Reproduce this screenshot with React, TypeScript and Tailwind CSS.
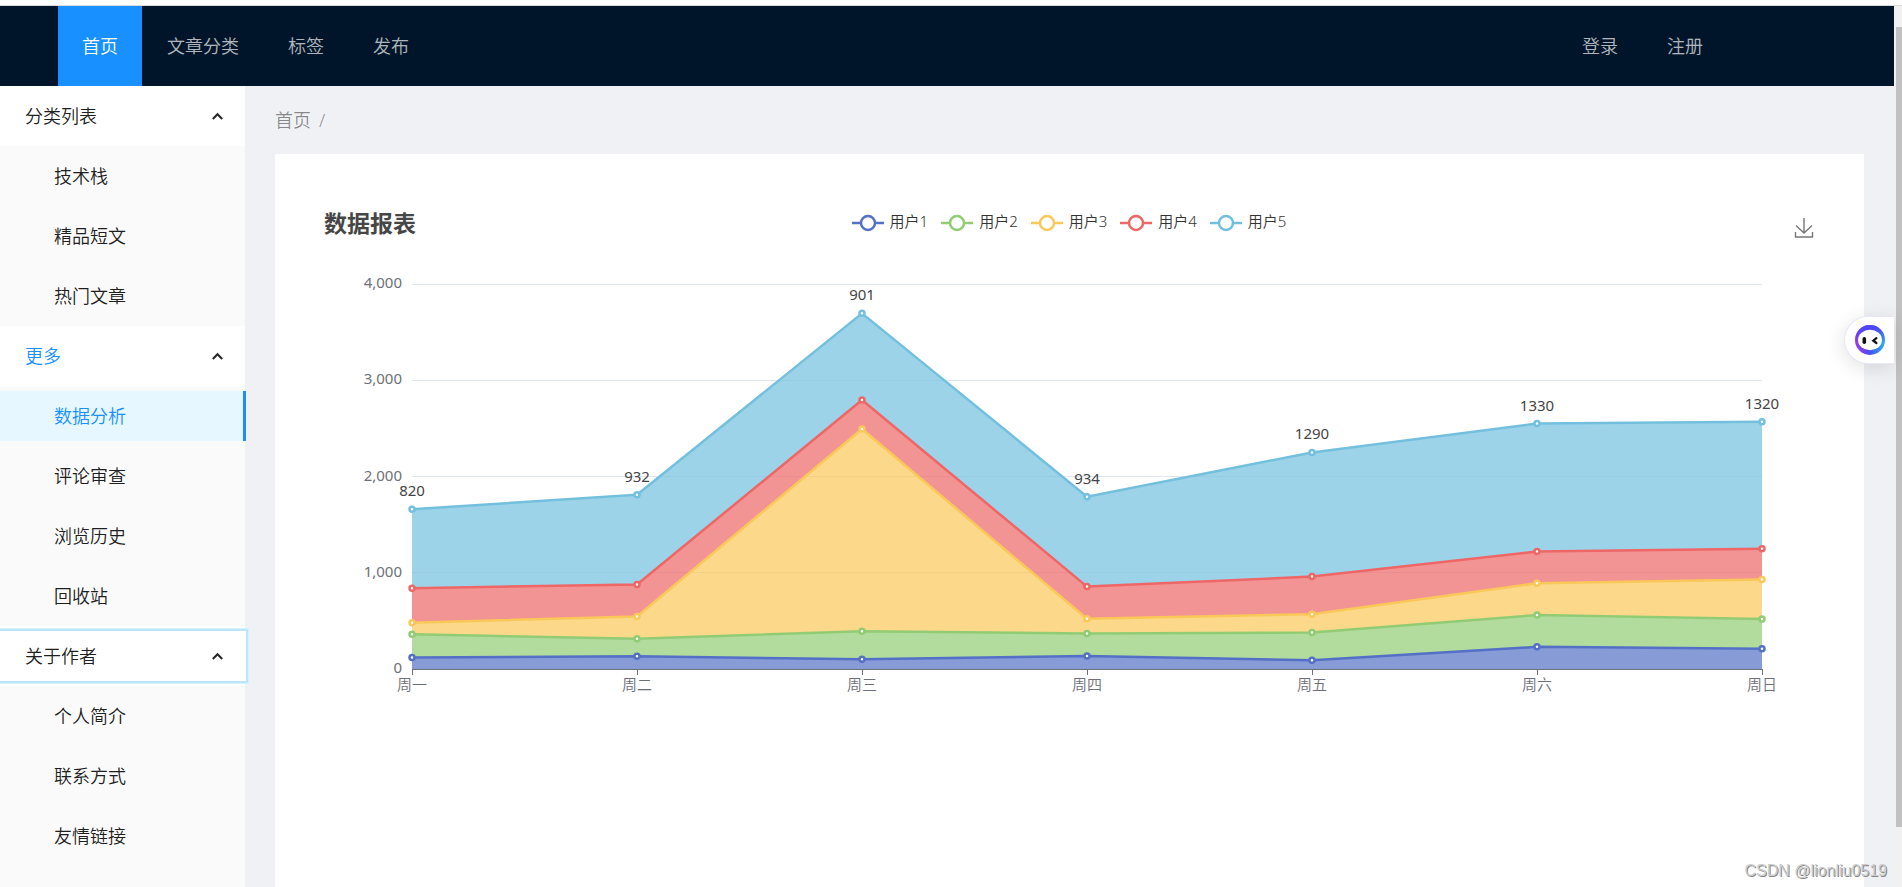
import React from "react";

const SERIES = [
  { name: "用户1", color: "#5470c6", data: [120, 132, 101, 134, 90, 230, 210] },
  { name: "用户2", color: "#91cc75", data: [240, 182, 291, 234, 290, 330, 310] },
  { name: "用户3", color: "#fac858", data: [120, 232, 2101, 154, 190, 330, 410] },
  { name: "用户4", color: "#ee6666", data: [360, 332, 301, 334, 390, 330, 320] },
  { name: "用户5", color: "#73c0de", data: [820, 932, 901, 934, 1290, 1330, 1320] },
];
const DAYS = ["周一", "周二", "周三", "周四", "周五", "周六", "周日"];
const TICKS = [0, 1000, 2000, 3000, 4000];

const LEFT = 137;
const STEP = 225;
const BASE = 409;
const px = (i: number) => LEFT + i * STEP;
const py = (v: number) => BASE - (v * 385) / 4000;

const STACK = SERIES.reduce<number[][]>((acc, s) => {
  const below = acc[acc.length - 1];
  acc.push(s.data.map((v, i) => v + (below ? below[i] : 0)));
  return acc;
}, []);

const line = (vals: number[]) => vals.map((v, i) => `${px(i)},${py(v)}`);

function StackedChart() {
  return (
    <svg viewBox="0 0 1589 450" className="mt-[21px] block w-full" role="img" aria-label="数据报表">
      {TICKS.slice(1).map((t) => (
        <line key={t} x1={px(0)} x2={px(6)} y1={Math.floor(py(t)) + 0.5} y2={Math.floor(py(t)) + 0.5} stroke="#e0e6f1" />
      ))}
      {STACK.map((vals, s) => {
        const under = s ? STACK[s - 1] : vals.map(() => 0);
        return (
          <polygon
            key={s}
            points={[...line(vals), ...line(under).reverse()].join(" ")}
            fill={SERIES[s].color}
            fillOpacity={0.7}
          />
        );
      })}
      <line x1={px(0)} x2={px(6) + 1} y1={BASE + 0.5} y2={BASE + 0.5} stroke="#6e7079" />
      {DAYS.map((d, i) => (
        <g key={d}>
          <line x1={px(i) + 0.5} x2={px(i) + 0.5} y1={BASE} y2={BASE + 6} stroke="#6e7079" />
          <text x={px(i)} y={BASE + 21} textAnchor="middle" fontSize={15} fill="#6e7079">{d}</text>
        </g>
      ))}
      {TICKS.map((t) => (
        <text key={t} x={LEFT - 10} y={py(t) + 4} textAnchor="end" fontSize={15} fill="#6e7079" className="font-normal">
          {t.toLocaleString("en-US")}
        </text>
      ))}
      {STACK.map((vals, s) => (
        <g key={s} stroke={SERIES[s].color}>
          <polyline points={line(vals).join(" ")} fill="none" strokeWidth={2.5} strokeLinejoin="bevel" />
          {vals.map((v, i) => (
            <circle key={i} cx={px(i)} cy={py(v)} r={2.5} fill="#fff" strokeWidth={2.5} />
          ))}
        </g>
      ))}
      {STACK[4].map((v, i) => (
        <text key={i} x={px(i)} y={py(v) - 13} textAnchor="middle" fontSize={15} fill="#444" className="font-normal">
          {SERIES[4].data[i]}
        </text>
      ))}
    </svg>
  );
}

function NavItem({ label, active = false }: { label: string; active?: boolean }) {
  return (
    <a
      href="#"
      className={`flex h-20 items-center px-6 ${active ? "bg-[#1890ff] text-white" : "text-white/70"}`}
    >
      {label}
    </a>
  );
}

const MENU = [
  { title: "分类列表", items: ["技术栈", "精品短文", "热门文章"] },
  { title: "更多", items: ["数据分析", "评论审查", "浏览历史", "回收站"], open: true },
  { title: "关于作者", items: ["个人简介", "联系方式", "友情链接"], focused: true },
];

function Sidebar() {
  return (
    <nav className="w-[245px] shrink-0 bg-[#fafafa] text-black/90">
      {MENU.map((group) => (
        <section key={group.title}>
          <div className="bg-white py-[5px]">
            <button
              type="button"
              className={`flex h-[50px] items-center justify-between bg-white pl-[25px] ${
                group.open ? "text-[#1890ff]" : ""
              } ${group.focused ? "relative w-[246px] pr-[23px] shadow-[0_0_0_2px_#bae7ff,0_0_0_3px_#d6f1ff]" : "w-full pr-[22px]"}`}
            >
              {group.title}
              <svg width="11" height="8" viewBox="0 0 11 8" fill="none" stroke="#262626" strokeWidth="2">
                <path d="M0.8 7 L5.500 2.200 L10.200 7" />
              </svg>
            </button>
          </div>
          <ul>
            {group.items.map((item) => (
              <li key={item} className="py-[5px]">
                <a
                  href="#"
                  className={`flex h-[50px] items-center pl-[54px] ${
                    item === "数据分析" ? "relative w-[246px] border-r-3 border-[#1890ff] bg-[#e6f7ff] text-[#1890ff]" : ""
                  }`}
                >
                  {item}
                </a>
              </li>
            ))}
          </ul>
        </section>
      ))}
    </nav>
  );
}

function AssistantButton() {
  return (
    <button
      type="button"
      aria-label="助手"
      className="absolute right-2 top-[316px] flex h-12 w-[50px] items-center rounded-l-full border border-r-0 border-[#e6e8f5] bg-white pl-[10px] shadow-[0_4px_20px_rgba(0,0,0,0.12)]"
    >
      <svg width="30" height="30" viewBox="0 0 30 30">
        <defs>
          <linearGradient id="ring" x1="0" y1="0.7" x2="1" y2="0.6">
            <stop offset="0" stopColor="#a838e0" />
            <stop offset="0.45" stopColor="#4a4cf5" />
            <stop offset="1" stopColor="#22b8e6" />
          </linearGradient>
          <linearGradient id="ringTop" x1="0" y1="0" x2="0" y2="1">
            <stop offset="0.1" stopColor="#4f46fb" />
            <stop offset="0.6" stopColor="#4f46fb" stopOpacity="0" />
          </linearGradient>
        </defs>
        <circle cx="15" cy="15" r="15" fill="url(#ring)" />
        <circle cx="15" cy="15" r="15" fill="url(#ringTop)" />
        <ellipse cx="15" cy="15" rx="12" ry="10.2" fill="#fff" />
        <rect x="7.5" y="12" width="3.6" height="7" rx="1.8" fill="#111" />
        <path d="M21.4 13.2 L18.3 15.7 L21.4 18" fill="none" stroke="#111" strokeWidth="2.2" strokeLinecap="round" />
      </svg>
    </button>
  );
}

export default function App() {
  return (
    <div className="relative flex min-h-screen flex-col bg-white font-['Noto_Sans','Noto_Sans_CJK_SC',sans-serif] text-[18px] leading-7 font-[350]">
      <div className="h-[6px] border-b border-[#d5dadb]" />
      <div className="flex grow">
        <div className="flex min-w-0 grow flex-col bg-[#f0f1f5]">
          <header className="flex justify-between bg-[#001529] pl-[58px] pr-[167px]">
            <nav className="flex gap-px">
              <NavItem label="首页" active />
              <NavItem label="文章分类" />
              <NavItem label="标签" />
              <NavItem label="发布" />
            </nav>
            <nav className="flex gap-px">
              <NavItem label="登录" />
              <NavItem label="注册" />
            </nav>
          </header>
          <div className="flex grow">
            <Sidebar />
            <main className="flex min-w-0 grow flex-col px-[30px]">
              <div className="flex h-[68px] items-center gap-2 text-black/45">
                <a href="#">首页</a>
                <span>/</span>
              </div>
              <section className="grow bg-white pt-[53px]">
                <div className="grid grid-cols-[1fr_auto_1fr] items-center pl-[49px] pr-[50px]">
                  <h1 className="text-[23px] leading-8 font-bold text-[#464646]">数据报表</h1>
                  <ul className="flex gap-[13px] pb-1 text-[15px] leading-6 text-[#333]">
                    {SERIES.map((s) => (
                      <li key={s.name} className="flex items-center gap-[6px]">
                        <svg width="32" height="22" viewBox="0 0 32 22" stroke={s.color} strokeWidth="2.5">
                          <line x1="0" x2="32" y1="13" y2="13" />
                          <circle cx="16" cy="13" r="7" fill="#fff" />
                        </svg>
                        {s.name}
                      </li>
                    ))}
                  </ul>
                  <button type="button" aria-label="下载" className="justify-self-end pt-[10px]">
                    <svg width="20" height="22" viewBox="0 0 20 22" fill="none" stroke="#777" strokeWidth="1.4">
                      <path d="M10 1V16M2 8.500L10 16L18 8.500M1.500 15V20H18.500V15" />
                    </svg>
                  </button>
                </div>
                <StackedChart />
              </section>
            </main>
          </div>
        </div>
        <div className="flex w-2 flex-col bg-[#f1f1f1] pl-[2px]">
          <div className="mt-[21px] h-[800px] bg-[#c1c1c1]" />
        </div>
      </div>
      <AssistantButton />
      <div className="absolute bottom-1 right-[15px] font-['Liberation_Sans',sans-serif] text-[16px] leading-6 font-normal text-[#ccc] [text-shadow:1px_1px_0_#888]">
        CSDN @lionliu0519
      </div>
    </div>
  );
}
